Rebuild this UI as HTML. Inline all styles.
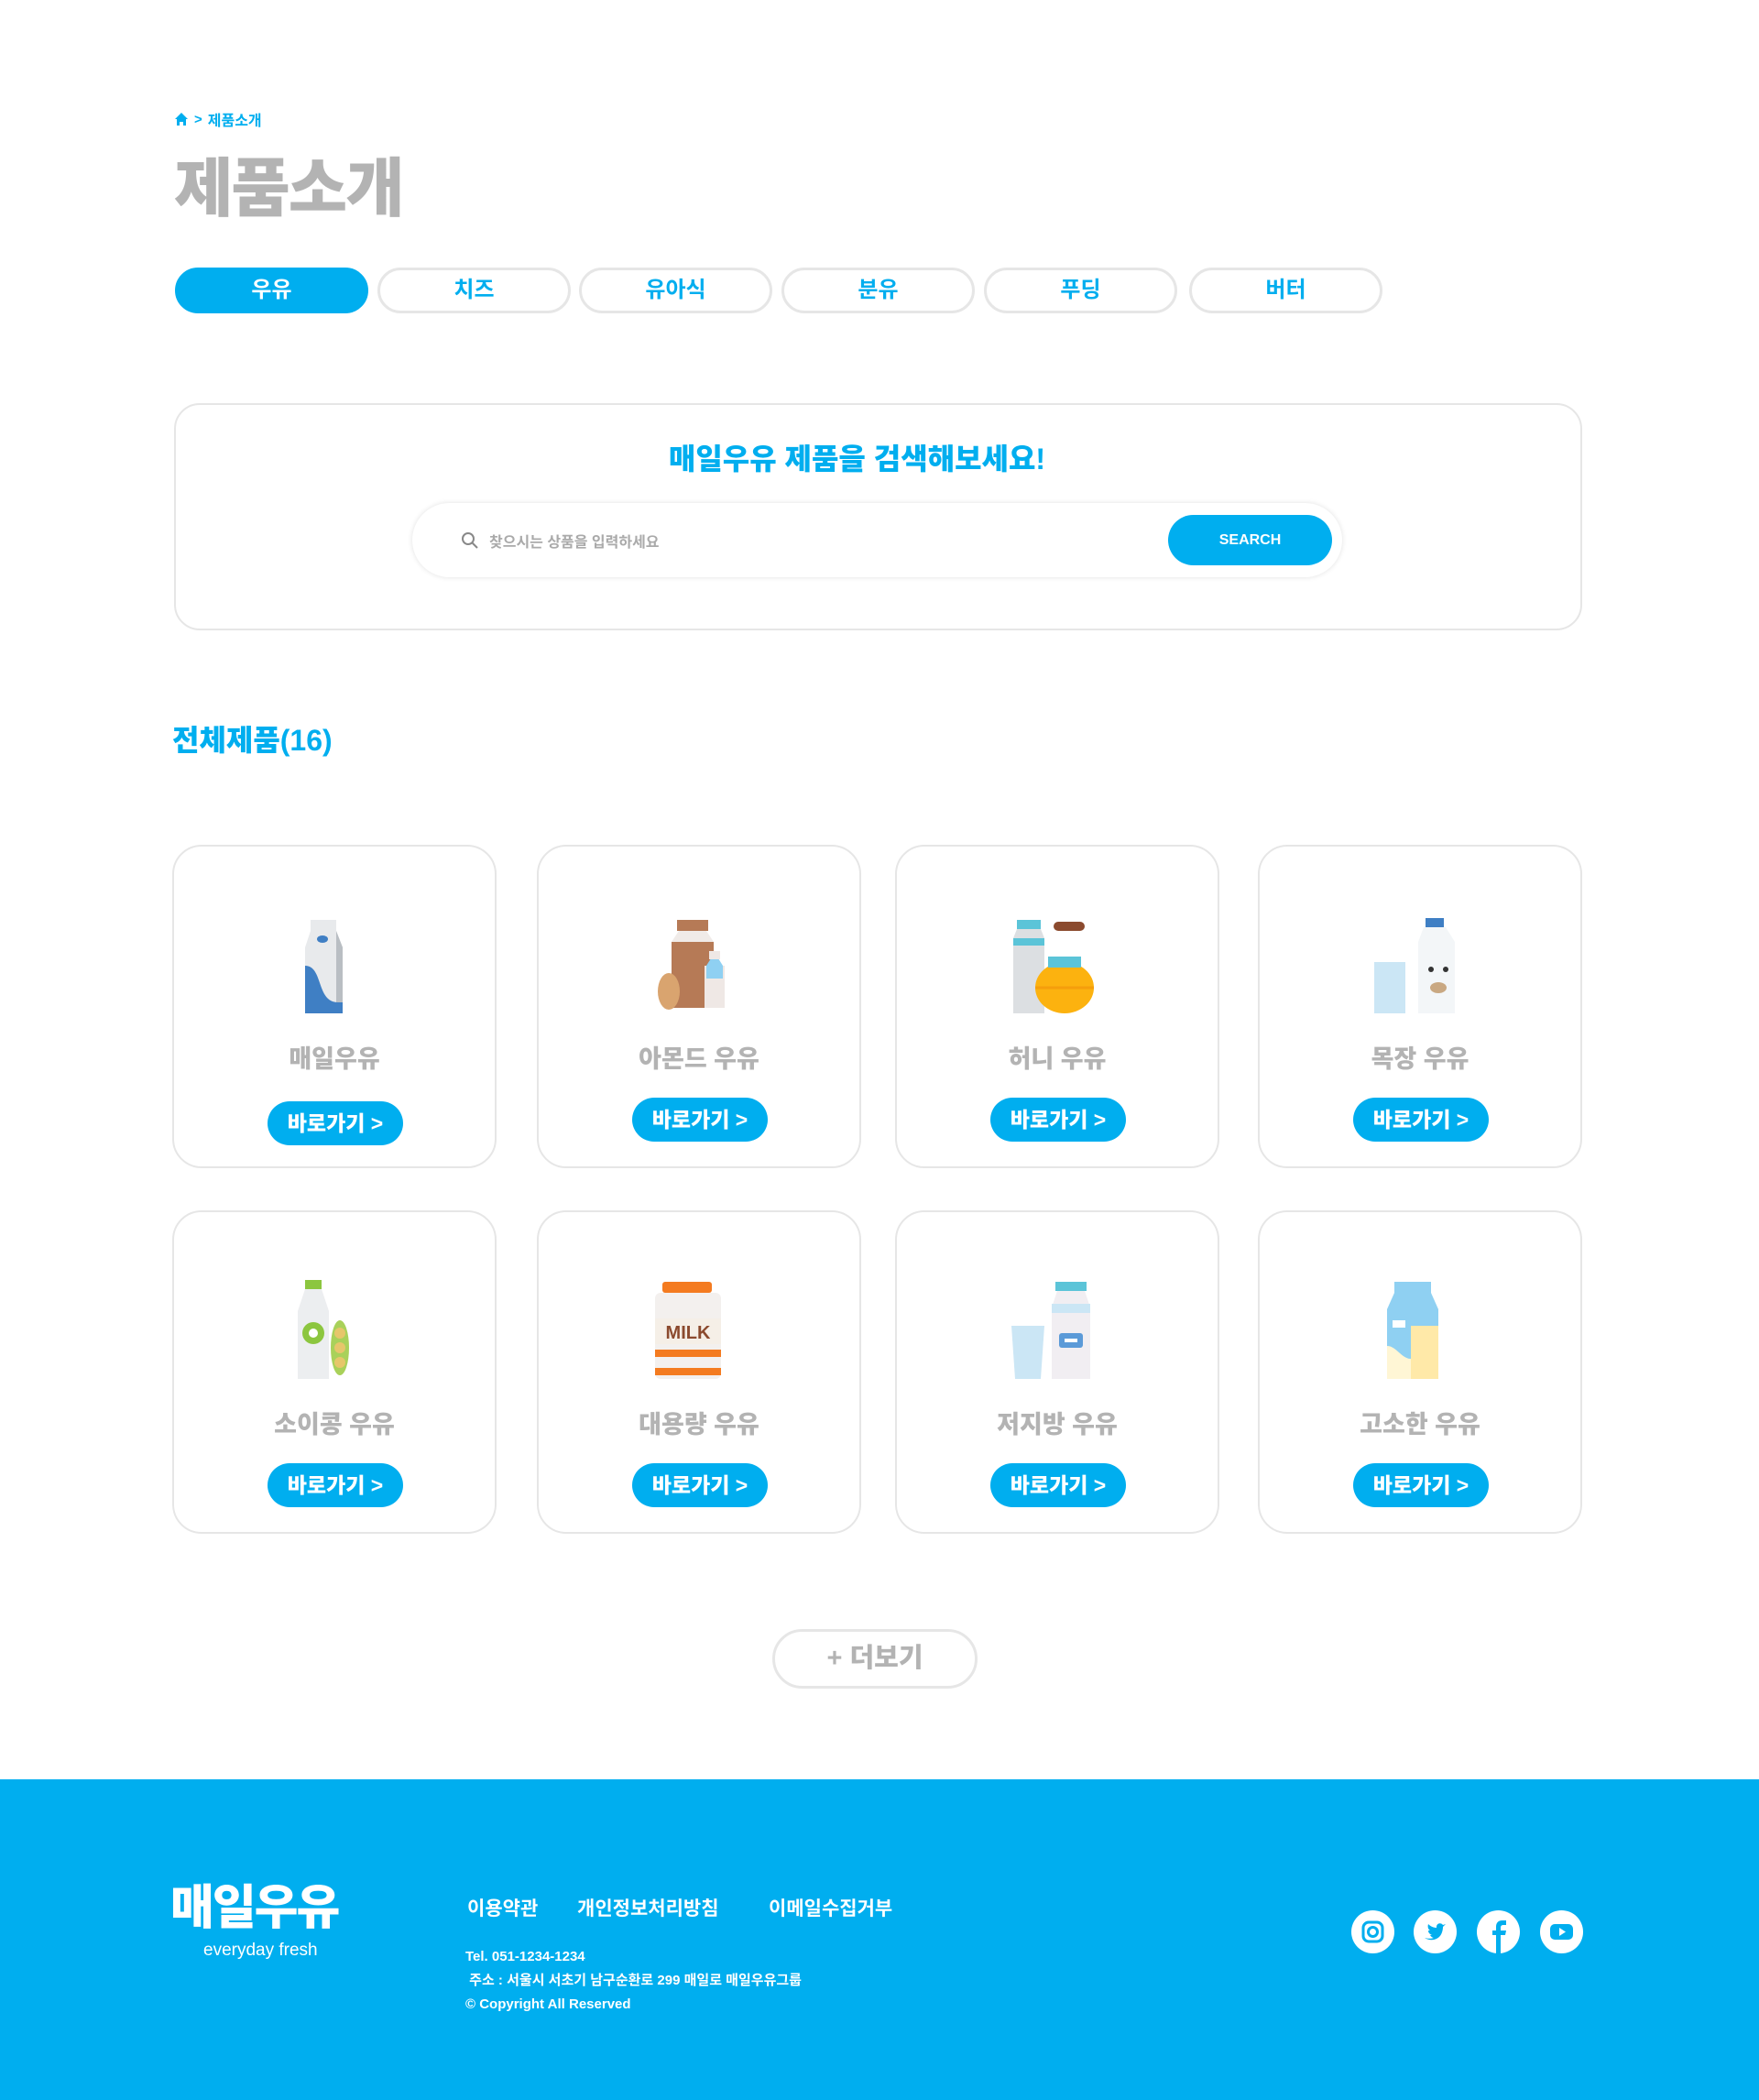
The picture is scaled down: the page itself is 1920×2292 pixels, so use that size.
<!DOCTYPE html>
<html><head><meta charset="utf-8"><style>
*{margin:0;padding:0;box-sizing:border-box}
body{width:1920px;height:2292px;background:#fff;font-family:"Liberation Sans","Noto Sans CJK KR",sans-serif;position:relative;overflow:hidden}
.a{position:absolute}
.bc{left:190px;top:118px;color:#00aeef;font-size:16px;font-weight:bold;display:flex;align-items:center;gap:6px}
h1{position:absolute;left:190px;top:150px;font-size:70px;color:#b3b3b3;font-weight:900;letter-spacing:-2px}
.tab{position:absolute;top:292px;width:211px;height:50px;border:3px solid #e6e6e6;border-radius:25px;color:#00aeef;font-size:24px;font-weight:bold;text-align:center;line-height:44px}
.tab.on{background:#00aeef;border-color:#00aeef;color:#fff}
.sbox{left:190px;top:440px;width:1537px;height:248px;border:2px solid #e6e6e6;border-radius:28px}
.sbox h2{position:absolute;left:0;right:46px;top:34px;text-align:center;color:#00aeef;font-size:32px;font-weight:900}
.inp{left:450px;top:549px;width:1015px;height:81px;border-radius:41px;box-shadow:0 0 6px rgba(0,0,0,.12);background:#fff}
.inp span{position:absolute;left:84px;top:29px;color:#aaa;font-size:16px;font-weight:bold}
.btn{left:1275px;top:562px;width:179px;height:55px;border-radius:28px;background:#00aeef;color:#fff;font-size:16px;font-weight:bold;text-align:center;line-height:55px}
.h3{left:188px;top:783px;color:#00aeef;font-size:32px;font-weight:900}
.card{position:absolute;width:354px;height:353px;border:2px solid #e6e6e6;border-radius:32px;background:#fff}
.card svg{position:absolute;left:117px;top:74px}
.card .nm{position:absolute;left:0;right:0;top:210px;text-align:center;color:#b3b3b3;font-size:27px;font-weight:900}
.card .go{position:absolute;left:102px;top:278px;width:148px;height:48px;border-radius:24px;background:#00aeef;color:#fff;font-size:23px;font-weight:900;text-align:center;line-height:48px}
.more{left:843px;top:1778px;width:224px;height:65px;border:3px solid #e6e6e6;border-radius:33px;text-align:center;line-height:59px;color:#b3b3b3;font-size:29px;font-weight:900}
footer{position:absolute;left:0;top:1942px;width:1920px;height:350px;background:#00aeef;color:#fff}
.soc{position:absolute;top:2085px;width:47px;height:47px;border-radius:50%;background:#fff}
</style></head><body>
<div class="a bc"><svg width="16" height="16" viewBox="0 0 16 16"><path d="M1 8L8 1l7 7h-2v7H10v-4H6v4H3V8z" fill="#00aeef"/></svg><span style="font-size:15px">&gt;</span><span>제품소개</span></div>
<h1>제품소개</h1>
<div class="tab on" style="left:191px">우유</div>
<div class="tab" style="left:412px">치즈</div>
<div class="tab" style="left:632px">유아식</div>
<div class="tab" style="left:853px">분유</div>
<div class="tab" style="left:1074px">푸딩</div>
<div class="tab" style="left:1298px">버터</div>
<div class="a sbox"><h2>매일우유 제품을 검색해보세요!</h2></div>
<div class="a inp"><svg class="a" style="left:53px;top:31px" width="20" height="20" viewBox="0 0 20 20"><circle cx="8" cy="8" r="6" fill="none" stroke="#888" stroke-width="2"/><path d="M12.5 12.5L18 18" stroke="#888" stroke-width="2"/></svg><span>찾으시는 상품을 입력하세요</span></div>
<div class="a btn">SEARCH</div>
<div class="a h3">전체제품(16)</div>

<div class="card" style="left:188px;top:922px"><svg width="120" height="110" viewBox="0 0 120 110"><rect x="32" y="6" width="28" height="12" fill="#e8eaec"/><path d="M26 36L32 18h28l7 18v72H26z" fill="#e8eaec"/><path d="M60 18l7 18v72H60z" fill="#b9bec3"/><path d="M26 56c20 0 12 40 36 40h5v12H26z" fill="#3f7fc4"/><ellipse cx="45" cy="27" rx="6" ry="4" fill="#3f7fc4"/></svg><div class="nm">매일우유</div><div class="go">바로가기 &gt;</div></div>
<div class="card" style="left:586px;top:922px"><svg width="120" height="110" viewBox="0 0 120 110"><rect x="34" y="6" width="34" height="12" fill="#b67a56"/><path d="M28 30l8-12h30l8 12z" fill="#f0ebe8"/><rect x="28" y="30" width="46" height="72" fill="#b67a56"/><ellipse cx="25" cy="84" rx="12" ry="20" fill="#d9a46f"/><rect x="64" y="56" width="22" height="46" fill="#efe8e5"/><path d="M66 56l5-8h8l5 8v14H66z" fill="#8fd0f2"/><rect x="69" y="40" width="12" height="9" fill="#efe8e5"/></svg><div class="nm">아몬드 우유</div><div class="go" style="top:274px">바로가기 &gt;</div></div>
<div class="card" style="left:977px;top:922px"><svg width="120" height="110" viewBox="0 0 120 110"><rect x="14" y="6" width="26" height="10" fill="#5bc4d8"/><path d="M10 26l4-10h26l4 10v82H10z" fill="#dcdfe2"/><rect x="10" y="26" width="34" height="8" fill="#5bc4d8"/><rect x="54" y="8" width="34" height="10" rx="5" fill="#8b4a2e"/><ellipse cx="66" cy="80" rx="32" ry="28" fill="#fcb20f"/><rect x="48" y="46" width="36" height="12" fill="#5bc4d8"/><path d="M34 80h64" stroke="#f59e0b" stroke-width="3"/></svg><div class="nm">허니 우유</div><div class="go" style="top:274px">바로가기 &gt;</div></div>
<div class="card" style="left:1373px;top:922px"><svg width="120" height="110" viewBox="0 0 120 110"><rect x="64" y="4" width="20" height="10" fill="#3f7fc4"/><path d="M56 30l6-16h24l10 16v78H56z" fill="#f3f6f8"/><rect x="8" y="52" width="34" height="56" fill="#cbe6f5"/><ellipse cx="78" cy="80" rx="9" ry="6" fill="#c9a882"/><circle cx="70" cy="60" r="3" fill="#333"/><circle cx="86" cy="60" r="3" fill="#333"/></svg><div class="nm">목장 우유</div><div class="go" style="top:274px">바로가기 &gt;</div></div>

<div class="card" style="left:188px;top:1321px"><svg width="120" height="110" viewBox="0 0 120 110"><rect x="26" y="0" width="18" height="10" fill="#8cc63f"/><path d="M18 34l8-24h18l8 24v74H18z" fill="#eceef0"/><circle cx="35" cy="58" r="12" fill="#8cc63f"/><circle cx="35" cy="58" r="5" fill="#fff"/><ellipse cx="64" cy="74" rx="10" ry="30" fill="#a9d15a"/><circle cx="64" cy="58" r="6" fill="#e6c66b"/><circle cx="64" cy="74" r="6" fill="#e6c66b"/><circle cx="64" cy="90" r="6" fill="#e6c66b"/></svg><div class="nm">소이콩 우유</div><div class="go" style="top:274px">바로가기 &gt;</div></div>
<div class="card" style="left:586px;top:1321px"><svg width="120" height="110" viewBox="0 0 120 110"><rect x="18" y="2" width="54" height="12" rx="3" fill="#f47b20"/><rect x="10" y="14" width="72" height="94" rx="6" fill="#f3f0ee"/><rect x="10" y="42" width="72" height="28" fill="#f5efe7"/><text x="46" y="64" text-anchor="middle" font-family="Liberation Sans" font-weight="bold" font-size="20" fill="#8b4a2e">MILK</text><rect x="10" y="76" width="72" height="8" fill="#f47b20"/><rect x="10" y="96" width="72" height="8" fill="#f47b20"/></svg><div class="nm">대용량 우유</div><div class="go" style="top:274px">바로가기 &gt;</div></div>
<div class="card" style="left:977px;top:1321px"><svg width="120" height="110" viewBox="0 0 120 110"><path d="M8 50h36l-4 58H12z" fill="#cbe6f5"/><rect x="56" y="2" width="34" height="10" fill="#5bc4d8"/><path d="M52 30l6-18h30l6 18v78H52z" fill="#f1eef2"/><rect x="52" y="26" width="42" height="10" fill="#cbe6f5"/><rect x="60" y="58" width="26" height="16" rx="3" fill="#5b9ad8"/><rect x="66" y="64" width="14" height="4" fill="#fff"/></svg><div class="nm">저지방 우유</div><div class="go" style="top:274px">바로가기 &gt;</div></div>
<div class="card" style="left:1373px;top:1321px"><svg width="120" height="110" viewBox="0 0 120 110"><rect x="30" y="2" width="40" height="12" fill="#8fd0f2"/><path d="M22 32l8-18h40l8 18v76H22z" fill="#8fd0f2"/><rect x="48" y="50" width="30" height="58" fill="#ffe9a8"/><path d="M22 72c10 0 16 14 26 14v22H22z" fill="#fff6d5"/><rect x="28" y="44" width="14" height="8" fill="#fff"/></svg><div class="nm">고소한 우유</div><div class="go" style="top:274px">바로가기 &gt;</div></div>

<div class="a more">+ 더보기</div>

<footer>
<div class="a" style="left:186px;top:112px;font-size:52px;line-height:58px;font-weight:900;letter-spacing:-2px">매일우유</div>
<div class="a" style="left:222px;top:176px;font-size:19px">everyday fresh</div>
<div class="a" style="left:510px;top:125px;font-size:21px;font-weight:bold">이용약관</div>
<div class="a" style="left:630px;top:125px;font-size:21px;font-weight:bold">개인정보처리방침</div>
<div class="a" style="left:839px;top:125px;font-size:21px;font-weight:bold">이메일수집거부</div>
<div class="a" style="left:508px;top:181px;font-size:15px;font-weight:bold;line-height:26px">Tel. 051-1234-1234<br>&nbsp;주소 : 서울시 서초기 남구순환로 299 매일로 매일우유그룹<br>© Copyright All Reserved</div>
</footer>
<div class="soc" style="left:1475px"><svg width="47" height="47" viewBox="0 0 47 47"><rect x="13" y="13" width="21" height="21" rx="6" fill="none" stroke="#00aeef" stroke-width="3"/><circle cx="23.5" cy="23.5" r="5" fill="none" stroke="#00aeef" stroke-width="3"/></svg></div>
<div class="soc" style="left:1543px"><svg width="47" height="47" viewBox="0 0 47 47"><path d="M12 30c6 4 16 3 19-6 1-3 1-5 1-6l3-3-3 1c-2-3-7-2-7 2v1c-4 0-7-2-9-4-1 3 0 6 2 7h-2c0 3 2 4 4 5h-2c1 2 3 3 4 3-3 1-6 1-10 0z" fill="#00aeef"/></svg></div>
<div class="soc" style="left:1612px"><svg width="47" height="47" viewBox="0 0 47 47"><path d="M26 47V27h5l1-5h-6v-3c0-2 1-3 3-3h3v-5h-4c-5 0-7 3-7 7v4h-4v5h4v20z" fill="#00aeef"/></svg></div>
<div class="soc" style="left:1681px"><svg width="47" height="47" viewBox="0 0 47 47"><rect x="11" y="15" width="25" height="17" rx="5" fill="#00aeef"/><path d="M21 19v9l7-4.5z" fill="#fff"/></svg></div>
</body></html>
